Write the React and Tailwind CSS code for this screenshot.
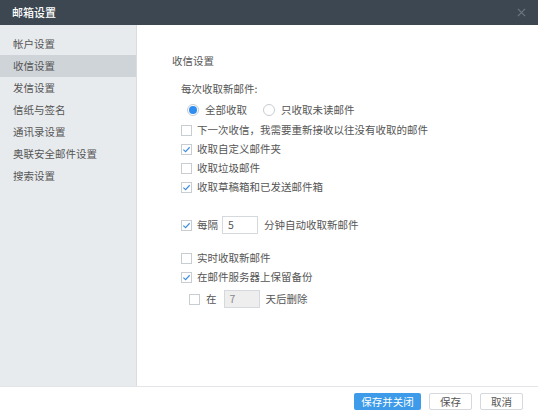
import React from 'react';

const font = { fontFamily: '"Noto Sans CJK SC", "Noto Sans", sans-serif' };

function Check({ checked }) {
  return (
    <span className="w-[11px] h-[11px] border border-[#c8cdd2] bg-white flex items-center justify-center shrink-0">
      {checked && (
        <svg width="9" height="9" viewBox="0 0 10 10">
          <path d="M1.5 5.2 L4 7.5 L8.5 2.5" fill="none" stroke="#3d8fe0" strokeWidth="1.3" />
        </svg>
      )}
    </span>
  );
}

function Radio({ checked }) {
  return (
    <span className="w-[12px] h-[12px] rounded-full border border-[#c8cdd2] bg-white flex items-center justify-center shrink-0">
      {checked && <span className="w-[8px] h-[8px] rounded-full bg-[#2f8ef0]" />}
    </span>
  );
}

function Row({ checked, children, className = '' }) {
  return (
    <div className={`flex items-center gap-[5px] h-[18px] ${className}`}>
      <Check checked={checked} />
      <span>{children}</span>
    </div>
  );
}

const menu = ['帐户设置', '收信设置', '发信设置', '信纸与签名', '通讯录设置', '奥联安全邮件设置', '搜索设置'];

export default function App() {
  return (
    <div className="w-[554px] h-[417px] bg-white text-[10.5px] text-[#555] overflow-hidden" style={font}>
      <div className="w-[538px] h-[387px] flex flex-col border-b border-[#e3e5e8]">
        <div className="h-[25px] bg-[#3d4751] flex items-center justify-between px-[12px] shrink-0">
          <span className="text-white text-[11px] font-medium">邮箱设置</span>
          <svg width="9" height="9" viewBox="0 0 10 10">
            <path d="M1 1 L9 9 M9 1 L1 9" stroke="#6c7680" strokeWidth="1.4" />
          </svg>
        </div>
        <div className="flex flex-1 min-h-0">
          <div className="w-[137px] bg-[#e8ebee] border-r border-[#d9dde1] pt-[8px] shrink-0">
            {menu.map((m, i) => (
              <div key={m} className={`h-[22px] flex items-center pl-[13px] ${i === 1 ? 'bg-[#cfd4d9]' : ''}`}>
                {m}
              </div>
            ))}
          </div>
          <div className="flex-1 pl-[35px] pt-[28px]">
            <div className="h-[16px] flex items-center">收信设置</div>
            <div className="pl-[9px] mt-[12px]">
              <div className="h-[16px] flex items-center">每次收取新邮件:</div>
              <div className="flex items-center h-[20px] mt-[3px] pl-[6px]">
                <Radio checked />
                <span className="ml-[6px]">全部收取</span>
                <span className="ml-[16px]"><Radio /></span>
                <span className="ml-[6px]">只收取未读邮件</span>
              </div>
              <Row className="mt-[1px]">下一次收信，我需要重新接收以往没有收取的邮件</Row>
              <Row checked className="mt-[1px]">收取自定义邮件夹</Row>
              <Row className="mt-[1px]">收取垃圾邮件</Row>
              <Row checked className="mt-[1px]">收取草稿箱和已发送邮件箱</Row>
              <div className="flex items-center gap-[5px] h-[18px] mt-[20px]">
                <Check checked />
                <span>每隔</span>
                <span className="w-[36px] h-[18px] border border-[#d5d9dd] bg-white flex items-center pl-[5px] ml-[-1px]">5</span>
                <span className="ml-[1px]">分钟自动收取新邮件</span>
              </div>
              <Row className="mt-[15px]">实时收取新邮件</Row>
              <Row checked className="mt-[1px]">在邮件服务器上保留备份</Row>
              <div className="flex items-center gap-[5px] h-[18px] mt-[4px] pl-[8px]">
                <Check />
                <span className="ml-[1px]">在</span>
                <span className="w-[36px] h-[18px] border border-[#d5d9dd] bg-[#eeeeee] text-[#8a8a8a] flex items-center pl-[5px] ml-[2px]">7</span>
                <span className="ml-[1px]">天后删除</span>
              </div>
            </div>
          </div>
        </div>
      </div>
      <div className="w-[538px] flex justify-end gap-[8px] pr-[15px] pt-[6px]">
        <button className="w-[67px] h-[17px] bg-[#3d9be9] text-white rounded-[2px] text-[10.5px] flex items-center justify-center">保存并关闭</button>
        <button className="w-[43px] h-[17px] bg-white border border-[#d5d9dd] rounded-[2px] text-[10.5px] flex items-center justify-center">保存</button>
        <button className="w-[43px] h-[17px] bg-white border border-[#d5d9dd] rounded-[2px] text-[10.5px] flex items-center justify-center">取消</button>
      </div>
    </div>
  );
}
